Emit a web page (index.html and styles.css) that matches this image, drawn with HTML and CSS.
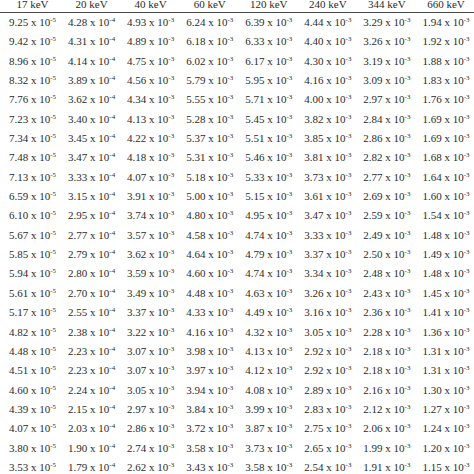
FILE: index.html
```html
<!DOCTYPE html>
<html>
<head>
<meta charset="utf-8">
<link rel="stylesheet" href="styles.css">
</head>
<body>
<div class="sheet">
  <div class="head">
    <span>17 keV</span><span>20 keV</span><span>40 keV</span><span>60 keV</span><span>120 keV</span><span>240 keV</span><span>344 keV</span><span>660 keV</span>
  </div>
  <div class="body">
    <div class="row"><span>9.25 x 10<sup>-5</sup></span><span>4.28 x 10<sup>-4</sup></span><span>4.93 x 10<sup>-3</sup></span><span>6.24 x 10<sup>-3</sup></span><span>6.39 x 10<sup>-3</sup></span><span>4.44 x 10<sup>-3</sup></span><span>3.29 x 10<sup>-3</sup></span><span>1.94 x 10<sup>-3</sup></span></div>
    <div class="row"><span>9.42 x 10<sup>-5</sup></span><span>4.31 x 10<sup>-4</sup></span><span>4.89 x 10<sup>-3</sup></span><span>6.18 x 10<sup>-3</sup></span><span>6.33 x 10<sup>-3</sup></span><span>4.40 x 10<sup>-3</sup></span><span>3.26 x 10<sup>-3</sup></span><span>1.92 x 10<sup>-3</sup></span></div>
    <div class="row"><span>8.96 x 10<sup>-5</sup></span><span>4.14 x 10<sup>-4</sup></span><span>4.75 x 10<sup>-3</sup></span><span>6.02 x 10<sup>-3</sup></span><span>6.17 x 10<sup>-3</sup></span><span>4.30 x 10<sup>-3</sup></span><span>3.19 x 10<sup>-3</sup></span><span>1.88 x 10<sup>-3</sup></span></div>
    <div class="row"><span>8.32 x 10<sup>-5</sup></span><span>3.89 x 10<sup>-4</sup></span><span>4.56 x 10<sup>-3</sup></span><span>5.79 x 10<sup>-3</sup></span><span>5.95 x 10<sup>-3</sup></span><span>4.16 x 10<sup>-3</sup></span><span>3.09 x 10<sup>-3</sup></span><span>1.83 x 10<sup>-3</sup></span></div>
    <div class="row"><span>7.76 x 10<sup>-5</sup></span><span>3.62 x 10<sup>-4</sup></span><span>4.34 x 10<sup>-3</sup></span><span>5.55 x 10<sup>-3</sup></span><span>5.71 x 10<sup>-3</sup></span><span>4.00 x 10<sup>-3</sup></span><span>2.97 x 10<sup>-3</sup></span><span>1.76 x 10<sup>-3</sup></span></div>
    <div class="row"><span>7.23 x 10<sup>-5</sup></span><span>3.40 x 10<sup>-4</sup></span><span>4.13 x 10<sup>-3</sup></span><span>5.28 x 10<sup>-3</sup></span><span>5.45 x 10<sup>-3</sup></span><span>3.82 x 10<sup>-3</sup></span><span>2.84 x 10<sup>-3</sup></span><span>1.69 x 10<sup>-3</sup></span></div>
    <div class="row"><span>7.34 x 10<sup>-5</sup></span><span>3.45 x 10<sup>-4</sup></span><span>4.22 x 10<sup>-3</sup></span><span>5.37 x 10<sup>-3</sup></span><span>5.51 x 10<sup>-3</sup></span><span>3.85 x 10<sup>-3</sup></span><span>2.86 x 10<sup>-3</sup></span><span>1.69 x 10<sup>-3</sup></span></div>
    <div class="row"><span>7.48 x 10<sup>-5</sup></span><span>3.47 x 10<sup>-4</sup></span><span>4.18 x 10<sup>-3</sup></span><span>5.31 x 10<sup>-3</sup></span><span>5.46 x 10<sup>-3</sup></span><span>3.81 x 10<sup>-3</sup></span><span>2.82 x 10<sup>-3</sup></span><span>1.68 x 10<sup>-3</sup></span></div>
    <div class="row"><span>7.13 x 10<sup>-5</sup></span><span>3.33 x 10<sup>-4</sup></span><span>4.07 x 10<sup>-3</sup></span><span>5.18 x 10<sup>-3</sup></span><span>5.33 x 10<sup>-3</sup></span><span>3.73 x 10<sup>-3</sup></span><span>2.77 x 10<sup>-3</sup></span><span>1.64 x 10<sup>-3</sup></span></div>
    <div class="row"><span>6.59 x 10<sup>-5</sup></span><span>3.15 x 10<sup>-4</sup></span><span>3.91 x 10<sup>-3</sup></span><span>5.00 x 10<sup>-3</sup></span><span>5.15 x 10<sup>-3</sup></span><span>3.61 x 10<sup>-3</sup></span><span>2.69 x 10<sup>-3</sup></span><span>1.60 x 10<sup>-3</sup></span></div>
    <div class="row"><span>6.10 x 10<sup>-5</sup></span><span>2.95 x 10<sup>-4</sup></span><span>3.74 x 10<sup>-3</sup></span><span>4.80 x 10<sup>-3</sup></span><span>4.95 x 10<sup>-3</sup></span><span>3.47 x 10<sup>-3</sup></span><span>2.59 x 10<sup>-3</sup></span><span>1.54 x 10<sup>-3</sup></span></div>
    <div class="row"><span>5.67 x 10<sup>-5</sup></span><span>2.77 x 10<sup>-4</sup></span><span>3.57 x 10<sup>-3</sup></span><span>4.58 x 10<sup>-3</sup></span><span>4.74 x 10<sup>-3</sup></span><span>3.33 x 10<sup>-3</sup></span><span>2.49 x 10<sup>-3</sup></span><span>1.48 x 10<sup>-3</sup></span></div>
    <div class="row"><span>5.85 x 10<sup>-5</sup></span><span>2.79 x 10<sup>-4</sup></span><span>3.62 x 10<sup>-3</sup></span><span>4.64 x 10<sup>-3</sup></span><span>4.79 x 10<sup>-3</sup></span><span>3.37 x 10<sup>-3</sup></span><span>2.50 x 10<sup>-3</sup></span><span>1.49 x 10<sup>-3</sup></span></div>
    <div class="row"><span>5.94 x 10<sup>-5</sup></span><span>2.80 x 10<sup>-4</sup></span><span>3.59 x 10<sup>-3</sup></span><span>4.60 x 10<sup>-3</sup></span><span>4.74 x 10<sup>-3</sup></span><span>3.34 x 10<sup>-3</sup></span><span>2.48 x 10<sup>-3</sup></span><span>1.48 x 10<sup>-3</sup></span></div>
    <div class="row"><span>5.61 x 10<sup>-5</sup></span><span>2.70 x 10<sup>-4</sup></span><span>3.49 x 10<sup>-3</sup></span><span>4.48 x 10<sup>-3</sup></span><span>4.63 x 10<sup>-3</sup></span><span>3.26 x 10<sup>-3</sup></span><span>2.43 x 10<sup>-3</sup></span><span>1.45 x 10<sup>-3</sup></span></div>
    <div class="row"><span>5.17 x 10<sup>-5</sup></span><span>2.55 x 10<sup>-4</sup></span><span>3.37 x 10<sup>-3</sup></span><span>4.33 x 10<sup>-3</sup></span><span>4.49 x 10<sup>-3</sup></span><span>3.16 x 10<sup>-3</sup></span><span>2.36 x 10<sup>-3</sup></span><span>1.41 x 10<sup>-3</sup></span></div>
    <div class="row"><span>4.82 x 10<sup>-5</sup></span><span>2.38 x 10<sup>-4</sup></span><span>3.22 x 10<sup>-3</sup></span><span>4.16 x 10<sup>-3</sup></span><span>4.32 x 10<sup>-3</sup></span><span>3.05 x 10<sup>-3</sup></span><span>2.28 x 10<sup>-3</sup></span><span>1.36 x 10<sup>-3</sup></span></div>
    <div class="row"><span>4.48 x 10<sup>-5</sup></span><span>2.23 x 10<sup>-4</sup></span><span>3.07 x 10<sup>-3</sup></span><span>3.98 x 10<sup>-3</sup></span><span>4.13 x 10<sup>-3</sup></span><span>2.92 x 10<sup>-3</sup></span><span>2.18 x 10<sup>-3</sup></span><span>1.31 x 10<sup>-3</sup></span></div>
    <div class="row"><span>4.51 x 10<sup>-5</sup></span><span>2.23 x 10<sup>-4</sup></span><span>3.07 x 10<sup>-3</sup></span><span>3.97 x 10<sup>-3</sup></span><span>4.12 x 10<sup>-3</sup></span><span>2.92 x 10<sup>-3</sup></span><span>2.18 x 10<sup>-3</sup></span><span>1.31 x 10<sup>-3</sup></span></div>
    <div class="row"><span>4.60 x 10<sup>-5</sup></span><span>2.24 x 10<sup>-4</sup></span><span>3.05 x 10<sup>-3</sup></span><span>3.94 x 10<sup>-3</sup></span><span>4.08 x 10<sup>-3</sup></span><span>2.89 x 10<sup>-3</sup></span><span>2.16 x 10<sup>-3</sup></span><span>1.30 x 10<sup>-3</sup></span></div>
    <div class="row"><span>4.39 x 10<sup>-5</sup></span><span>2.15 x 10<sup>-4</sup></span><span>2.97 x 10<sup>-3</sup></span><span>3.84 x 10<sup>-3</sup></span><span>3.99 x 10<sup>-3</sup></span><span>2.83 x 10<sup>-3</sup></span><span>2.12 x 10<sup>-3</sup></span><span>1.27 x 10<sup>-3</sup></span></div>
    <div class="row"><span>4.07 x 10<sup>-5</sup></span><span>2.03 x 10<sup>-4</sup></span><span>2.86 x 10<sup>-3</sup></span><span>3.72 x 10<sup>-3</sup></span><span>3.87 x 10<sup>-3</sup></span><span>2.75 x 10<sup>-3</sup></span><span>2.06 x 10<sup>-3</sup></span><span>1.24 x 10<sup>-3</sup></span></div>
    <div class="row"><span>3.80 x 10<sup>-5</sup></span><span>1.90 x 10<sup>-4</sup></span><span>2.74 x 10<sup>-3</sup></span><span>3.58 x 10<sup>-3</sup></span><span>3.73 x 10<sup>-3</sup></span><span>2.65 x 10<sup>-3</sup></span><span>1.99 x 10<sup>-3</sup></span><span>1.20 x 10<sup>-3</sup></span></div>
    <div class="row"><span>3.53 x 10<sup>-5</sup></span><span>1.79 x 10<sup>-4</sup></span><span>2.62 x 10<sup>-3</sup></span><span>3.43 x 10<sup>-3</sup></span><span>3.58 x 10<sup>-3</sup></span><span>2.54 x 10<sup>-3</sup></span><span>1.91 x 10<sup>-3</sup></span><span>1.15 x 10<sup>-3</sup></span></div>
  </div>
</div>
</body>
</html>
```
FILE: styles.css
```css
html, body {
  margin: 0;
  padding: 0;
  background: #ffffff;
  overflow: hidden;
}
body {
  width: 474px;
  height: 474px;
}
.sheet {
  font-family: "Liberation Serif", "Times New Roman", serif;
  font-size: 11px;
  color: #2b2b2b;
  margin-top: -2px;
}
.head {
  display: grid;
  grid-template-columns: repeat(8, 59.07px);
  padding-left: 3px;
  height: 12px;
  line-height: 12px;
  padding-bottom: 2px;
  border-bottom: 1.5px solid #4a4a4a;
  text-align: center;
  white-space: nowrap;
}
.row {
  display: grid;
  grid-template-columns: repeat(8, 59.07px);
  padding-left: 3px;
  height: 19.35px;
  line-height: 19.35px;
  text-align: center;
  white-space: nowrap;
}
.row sup {
  font-size: 7px;
  line-height: 0;
  vertical-align: 4px;
}
```
